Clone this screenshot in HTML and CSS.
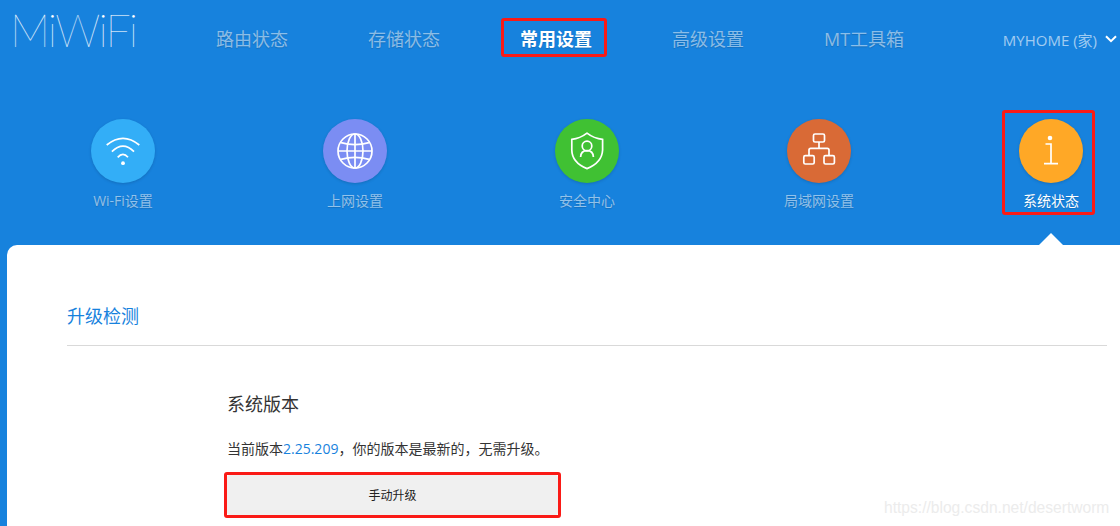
FILE: index.html
```html
<!DOCTYPE html>
<html lang="zh-CN">
<head>
    <meta charset="UTF-8">
    <meta name="viewport" content="width=device-width, initial-scale=1.0">
    <title>MiWiFi - 系统状态</title>
    <link rel="stylesheet" href="styles.css">
</head>
<body>
    <header class="top-bar">
        <div class="logo">MiWiFi</div>
        <nav class="main-nav">
            <a href="#">路由状态</a>
            <a href="#">存储状态</a>
            <a href="#" class="active marked">常用设置</a>
            <a href="#">高级设置</a>
            <a href="#">MT工具箱</a>
        </nav>
        <div class="router-name">
            <span>MYHOME (家)</span>
            <svg class="chevron" width="12" height="8" viewBox="0 0 12 8"><path d="M1 1.2 6 6.2 11 1.2" fill="none" stroke="#fff" stroke-width="2"/></svg>
        </div>
    </header>

    <div class="tab-row">
        <a href="#" class="tab">
            <span class="circle wifi">
                <svg width="64" height="64" viewBox="0 0 64 64" fill="none" stroke="#fff" stroke-width="1.7">
                    <path d="M15.7 26Q32 12.6 48.3 26"/>
                    <path d="M20.9 32.7Q32 21.6 43 32.7"/>
                    <path d="M26.7 38.3Q32 32.6 37 38.3"/>
                    <circle cx="32" cy="44.2" r="1.9" fill="#fff" stroke="none"/>
                </svg>
            </span>
            <span class="tab-label">Wi-Fi设置</span>
        </a>
        <a href="#" class="tab">
            <span class="circle net">
                <svg width="64" height="64" viewBox="0 0 64 64" fill="none" stroke="#fff" stroke-width="1.7">
                    <circle cx="32" cy="32" r="17"/>
                    <ellipse cx="32" cy="32" rx="8" ry="17"/>
                    <path d="M32 15V49"/>
                    <path d="M18 23.6Q32 27.6 46 23.6"/>
                    <path d="M15 32H49"/>
                    <path d="M18 40.4Q32 36.4 46 40.4"/>
                </svg>
            </span>
            <span class="tab-label">上网设置</span>
        </a>
        <a href="#" class="tab">
            <span class="circle safe">
                <svg width="64" height="64" viewBox="0 0 64 64" fill="none" stroke="#fff" stroke-width="1.7">
                    <path d="M32 14.2Q25 19.6 16.8 20.4V31Q17 43.6 32 49.6 47 43.6 47.6 31V20.4Q39 19.6 32 14.2Z"/>
                    <circle cx="32" cy="27" r="4.8"/>
                    <path d="M25.6 38Q25.8 31.6 32 31.6 38.2 31.6 38.4 38"/>
                </svg>
            </span>
            <span class="tab-label">安全中心</span>
        </a>
        <a href="#" class="tab">
            <span class="circle lan">
                <svg width="64" height="64" viewBox="0 0 64 64" fill="none" stroke="#fff" stroke-width="1.7">
                    <rect x="26.5" y="15" width="11" height="8" rx="1.5"/>
                    <path d="M32 23V29.3M22 36.5V31Q22 29.3 23.7 29.3H40.3Q42 29.3 42 31V36.5"/>
                    <rect x="16.8" y="36.7" width="10.4" height="8.3" rx="1.5"/>
                    <rect x="37" y="36.7" width="10.4" height="8.3" rx="1.5"/>
                </svg>
            </span>
            <span class="tab-label">局域网设置</span>
        </a>
        <a href="#" class="tab active marked">
            <span class="circle status">
                <svg width="64" height="64" viewBox="0 0 64 64" fill="none" stroke="#fff" stroke-width="1.7">
                    <circle cx="31" cy="19" r="2.3" fill="#fff" stroke="none"/>
                    <path d="M26.5 25H32V44.6M25 44.6H39"/>
                </svg>
            </span>
            <span class="tab-label">系统状态</span>
        </a>
    </div>

    <main class="panel">
        <h2 class="panel-title">升级检测</h2>
        <section class="version">
            <h3>系统版本</h3>
            <p>当前版本<span class="num">2.25.209</span>，你的版本是最新的，无需升级。</p>
            <button class="upgrade-btn marked">手动升级</button>
        </section>
    </main>

    <div class="watermark">https://blog.csdn.net/desertworm</div>
</body>
</html>
```

FILE: styles.css
```css
:root {
    --blue: #1782dd;
    --red: #fa1a16;
}

* {
    margin: 0;
    padding: 0;
    box-sizing: border-box;
    font-family: "Open Sans", "Noto Sans CJK SC", sans-serif;
}

html, body {
    height: 526px;
    overflow: hidden;
}

body {
    position: relative;
    background-color: var(--blue);
    color: #333;
}

a {
    text-decoration: none;
    color: inherit;
}

.top-bar {
    display: flex;
    align-items: center;
    height: 78px;
    padding-left: 10px;
}

.logo {
    width: 206px;
    align-self: flex-start;
    margin-top: 3px;
    height: 54px;
    line-height: 54px;
    font-family: "Lato", sans-serif;
    font-weight: 100;
    font-size: 45px;
    letter-spacing: -1.9px;
    color: #fff;
    text-shadow: 0 0 1px rgba(255, 255, 255, 0.35);
}

.main-nav {
    display: flex;
    gap: 80px;
}

.main-nav a {
    position: relative;
    font-size: 18px;
    line-height: 24px;
    color: rgba(255, 255, 255, 0.52);
    text-shadow: 0 1px 1px rgba(0, 0, 0, 0.15);
}

.main-nav a.active {
    color: #fff;
    font-weight: 700;
}

.router-name {
    display: flex;
    align-items: center;
    gap: 8px;
    margin-left: auto;
    padding-right: 3px;
    font-size: 15px;
    color: rgba(255, 255, 255, 0.6);
}

.tab-row {
    display: grid;
    grid-template-columns: repeat(5, 232px);
    margin: 41px 0 34px 7px;
}

.tab {
    position: relative;
    display: flex;
    flex-direction: column;
    align-items: center;
    gap: 8px;
}

.circle {
    display: block;
    width: 64px;
    height: 64px;
    border-radius: 50%;
    box-shadow: 0 1px 3px rgba(0, 0, 0, 0.15);
}

.circle svg {
    display: block;
}

.wifi { background-color: #33aef7; }
.net { background-color: #7b8df3; }
.safe { background-color: #40c133; }
.lan { background-color: #d96a36; }
.status { background-color: #ffa826; }

.tab-label {
    font-size: 14px;
    line-height: 20px;
    color: rgba(255, 255, 255, 0.55);
    text-shadow: 0 1px 1px rgba(0, 0, 0, 0.15);
}

.tab.active .tab-label {
    color: #fff;
}

.panel {
    position: relative;
    width: 1160px;
    height: 281px;
    margin-left: 7px;
    padding: 60px 0 0 60px;
    background-color: #fff;
    border-radius: 10px 10px 0 0;
}

/* little arrow above the panel, points at the open tab */
.panel::before {
    content: "";
    position: absolute;
    top: -12px;
    left: 1032px;
    border-left: 12px solid transparent;
    border-right: 12px solid transparent;
    border-bottom: 12px solid #fff;
}

.panel-title {
    width: 1040px;
    padding-bottom: 18px;
    border-bottom: 1px solid #d9d9d9;
    font-size: 18px;
    font-weight: 400;
    line-height: 22px;
    color: #1782dd;
}

.version {
    margin: 47px 0 0 160px;
}

.version h3 {
    font-size: 18px;
    font-weight: 400;
    line-height: 22px;
}

.version p {
    margin-top: 24px;
    font-size: 14px;
    line-height: 20px;
}

.num {
    color: #1782dd;
}

.upgrade-btn {
    position: relative;
    display: block;
    width: 331px;
    height: 40px;
    margin-top: 16px;
    border: none;
    border-radius: 3px;
    background-color: #f0f0f0;
    font-size: 12px;
    color: #222;
}

/* red marker boxes drawn over the screenshot */
.marked::after {
    content: "";
    position: absolute;
    box-sizing: border-box;
    border: 3px solid var(--red);
    border-radius: 3px;
    pointer-events: none;
}

.main-nav a.marked::after {
    top: -9px;
    left: -19px;
    width: 106px;
    height: 39px;
}

.tab.marked::after {
    top: -9px;
    left: 67px;
    width: 93px;
    height: 105px;
}

.upgrade-btn.marked::after {
    top: -3px;
    left: -3px;
    width: 337px;
    height: 46px;
}

.watermark {
    position: absolute;
    top: 498px;
    left: 884px;
    font-family: "Liberation Sans", sans-serif;
    font-size: 15.6px;
    line-height: 20px;
    color: #ececec;
}
```
